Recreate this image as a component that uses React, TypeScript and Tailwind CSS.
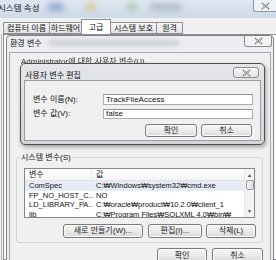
import React from 'react'

const ui = '"Liberation Sans", "Noto Sans CJK KR", sans-serif'

function CloseX() {
  return (
    <svg width="9" height="8" viewBox="0 0 9 8">
      <path d="M1 1 L8 7 M8 1 L1 7" stroke="#6b6b6b" strokeWidth="1.6" strokeDasharray="1.2 0.8" fill="none" />
    </svg>
  )
}

function Btn({ label, className }: { label: string; className: string }) {
  return (
    <div
      className={`flex shrink-0 items-center justify-center rounded-[3px] border border-[#7a7a7a] bg-gradient-to-b from-[#f6f6f6] via-[#ebebeb] to-[#d9d9d9] text-[8px] text-[#1a1a1a] shadow-[inset_0_0_0_1px_#fcfcfc] ${className}`}
    >
      {label}
    </div>
  )
}

const tabCls = 'border border-[#8c8e94] bg-gradient-to-b from-[#f5f5f5] to-[#e2e2e2] text-center'

const rows = [
  { name: 'ComSpec', value: 'C:₩Windows₩system32₩cmd.exe', sel: true },
  { name: 'FP_NO_HOST_C...', value: 'NO', sel: false },
  { name: 'LD_LIBRARY_PA...', value: 'C:₩oracle₩product₩10.2.0₩client_1', sel: false },
  { name: 'lib', value: 'C:₩Program Files₩SQLXML 4.0₩bin₩', sel: false },
]

export default function App() {
  return (
    <div className="relative h-[260px] w-[276px] overflow-hidden bg-[#f0f0f0]" style={{ fontFamily: ui }}>
      {/* system properties window */}
      <div className="flex h-full flex-col">
        <div className="relative h-[18px] shrink-0 bg-gradient-to-b from-[#dfe7f1] to-[#cdd9e7]">
          <span className="absolute left-[48px] top-[3px] h-[8px] w-[16px] rounded-full bg-[#8ea6cf] blur-[3px]" />
          <span className="absolute left-[86px] top-[3px] h-[8px] w-[10px] rounded-full bg-[#d9c58a] blur-[3px]" />
          <span className="absolute left-[128px] top-[4px] h-[6px] w-[8px] rounded-full bg-[#8fbf8f] blur-[3px]" />
          <span className="absolute left-[150px] top-[4px] h-[6px] w-[32px] rounded-full bg-[#a9b3c0] blur-[3px]" />
          <span className="absolute left-[-2px] top-[3px] whitespace-nowrap text-[8.5px] leading-[10px] text-[#111]">시스템 속성</span>
          <div className="absolute right-0 top-0 flex h-[12px] w-[23px] items-center justify-center rounded-bl-[3px] border-b border-l border-[#8e99a7] bg-[#eef1f5]">
            <CloseX />
          </div>
        </div>

        {/* tabs */}
        <div className="flex h-[16px] shrink-0 items-end pl-[3px] text-[8px] leading-[11px] text-[#111]">
          <div className={`h-[12px] w-[46px] border-r-0 ${tabCls}`}>컴퓨터 이름</div>
          <div className={`h-[12px] w-[32px] border-r-0 ${tabCls}`}>하드웨어</div>
          <div className="h-[15px] w-[30px] border border-b-0 border-[#8c8e94] bg-white pt-[2px] text-center">고급</div>
          <div className={`h-[12px] w-[45px] border-l-0 border-r-0 ${tabCls}`}>시스템 보호</div>
          <div className={`h-[12px] w-[27px] ${tabCls}`}>원격</div>
        </div>

        {/* tab panel */}
        <div className="-mr-[10px] ml-[3px] flex-1 border border-[#8c8e94] bg-white" />
      </div>
      <div className="absolute left-[1px] top-[34px] h-[230px] w-px bg-[#b5b5b5]" />

      {/* environment variables dialog */}
      <div className="absolute left-[6px] top-[35px] flex h-[240px] w-[268px] flex-col rounded-t-[4px] border border-[#7f8286] bg-[#ebedf0] px-[2px]">
        <div className="relative flex h-[16px] shrink-0 items-start pl-[1px] pt-[3px]">
          <span className="text-[8px] leading-[10px] text-[#111]">환경 변수</span>
          <span className="ml-[7px] mt-[1px] h-[6px] w-[130px] rounded bg-[#b8bcc2] opacity-60 blur-[2px]" />
          <div className="absolute right-[-1px] top-0 flex h-[11px] w-[28px] items-center justify-center rounded-b-[3px] border border-t-0 border-[#8a8d92] bg-[#f3f3f3]">
            <CloseX />
          </div>
        </div>

        {/* client area */}
        <div className="flex flex-1 flex-col border border-[#a5a8ad] bg-[#f0f0f0] pl-[6px] pr-[7px]">
          <div className="h-[104px] shrink-0 pl-[5px] pt-[4px] text-[8px] leading-[10px]">
            <span className="whitespace-nowrap text-[#333] blur-[0.4px]">Administrator에 대한 사용자 변수(U)</span>
          </div>

          {/* system variables group */}
          <div className="relative flex h-[86px] w-[247px] shrink-0 flex-col rounded-[3px] border border-[#d5d5d5] pl-[7px] pr-[6px] pt-[10px]">
            <span className="absolute left-[3px] top-[-5px] bg-[#f0f0f0] px-[1px] text-[8px] leading-[10px] text-[#111]">시스템 변수(S)</span>

            <div className="relative h-[50px] w-[231px] overflow-hidden border border-[#828790] bg-white text-[7.5px] leading-[9.5px] text-[#111]">
              <div className="flex h-[12px] items-center border-b border-[#e3e3e3] bg-gradient-to-b from-white to-[#f4f4f4]">
                <span className="w-[67px] border-r border-[#e5e5e5] pl-[4px] text-[8px]">변수</span>
                <span className="pl-[4px] text-[8px]">값</span>
              </div>
              {rows.map((r) => (
                <div key={r.name} className={`flex h-[9.5px] items-center whitespace-nowrap ${r.sel ? 'bg-[#e6ecf5]' : ''}`}>
                  <span className="w-[68px] overflow-hidden pl-[4px]">{r.name}</span>
                  <span className="pl-[3px]">{r.value}</span>
                </div>
              ))}
              {/* scrollbar */}
              <div className="absolute right-0 top-0 flex h-full w-[10px] flex-col items-center border-l border-[#e8e8e8] bg-[#f3f3f3]">
                <span className="mt-[3px] text-[5px] leading-[6px] text-[#444]">▲</span>
                <div className="mt-[2px] h-[10px] w-[8px] rounded-[2px] border border-[#9a9a9a] bg-gradient-to-r from-[#f2f2f2] to-[#dcdcdc]" />
                <span className="mb-[3px] mt-auto text-[5px] leading-[6px] text-[#444]">▼</span>
              </div>
            </div>

            <div className="mt-[6px] flex justify-end gap-[4px]">
              <Btn label="새로 만들기(W)..." className="mr-[1px] h-[14px] w-[80px]" />
              <Btn label="편집(I)..." className="h-[14px] w-[54px]" />
              <Btn label="삭제(L)" className="h-[14px] w-[50px]" />
            </div>
          </div>

          <div className="mt-[5px] flex justify-end gap-[5px]">
            <Btn label="확인" className="h-[15px] w-[50px]" />
            <Btn label="취소" className="h-[15px] w-[51px]" />
          </div>
        </div>
      </div>

      {/* edit user variable dialog */}
      <div className="absolute left-[20px] top-[63px] flex h-[82px] w-[245px] flex-col rounded-[5px] border border-[#4d4f52] bg-gradient-to-b from-[#e4e6e9] to-[#d3d5d8] px-[3px] pb-[3px] shadow-[1px_2px_4px_rgba(0,0,0,0.35)]">
        <div className="flex h-[16px] shrink-0 items-start justify-between pr-[2px] pt-[3px]">
          <span className="pl-[1px] pt-[4px] text-[8px] leading-[10px] text-[#111]">사용자 변수 편집</span>
          <div className="flex h-[11px] w-[26px] items-center justify-center rounded-[3px] border border-[#8a8d92] bg-gradient-to-b from-[#f8f8f8] to-[#e4e4e4]">
            <CloseX />
          </div>
        </div>
        <div className="flex-1 border border-[#9a9da2] bg-[#f0f0f0] pt-[13px]">
          <div className="flex h-[11px] items-center">
            <span className="w-[78px] pl-[8px] text-[8px] leading-[10px] text-[#111]">변수 이름(N):</span>
            <div className="flex h-[11px] w-[150px] items-center border border-[#abadb3] border-t-[#8e9196] bg-white pl-[2px] text-[8px] leading-[10px] text-[#111]">TrackFileAccess</div>
          </div>
          <div className="mt-[4px] flex h-[10px] items-center">
            <span className="w-[78px] pl-[8px] text-[8px] leading-[10px] text-[#111]">변수 값(V):</span>
            <div className="flex h-[10px] w-[150px] items-center border border-[#abadb3] border-t-[#8e9196] bg-white pl-[2px] text-[8px] leading-[10px] text-[#111]">false</div>
          </div>
          <div className="mt-[5px] flex justify-end gap-[4px] pr-[8px]">
            <Btn label="확인" className="h-[13px] w-[52px]" />
            <Btn label="취소" className="h-[13px] w-[51px]" />
          </div>
        </div>
      </div>
    </div>
  )
}
